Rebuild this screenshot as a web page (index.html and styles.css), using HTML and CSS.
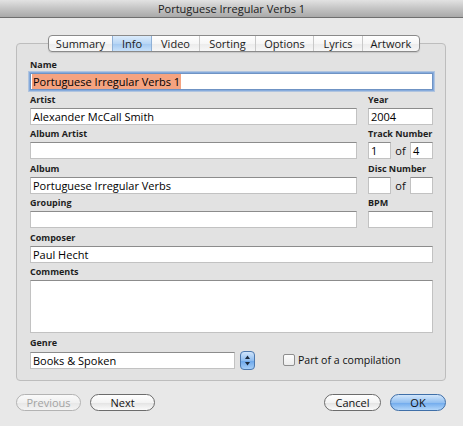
FILE: index.html
```html
<!DOCTYPE html>
<html>
<head>
<meta charset="utf-8">
<title>Portuguese Irregular Verbs 1</title>
<link rel="stylesheet" href="styles.css">
</head>
<body>
<div class="window">
  <div class="titlebar">Portuguese Irregular Verbs 1</div>
  <div class="content">
    <div class="tabs">
      <span class="tab t-summary">Summary</span>
      <span class="tab t-info active">Info</span>
      <span class="tab t-video">Video</span>
      <span class="tab t-sorting">Sorting</span>
      <span class="tab t-options">Options</span>
      <span class="tab t-lyrics">Lyrics</span>
      <span class="tab t-artwork">Artwork</span>
    </div>
    <div class="panel">
      <div class="form">
        <div class="field span2">
          <div class="label">Name</div>
          <div class="input focus"><span class="sel">Portuguese Irregular Verbs 1</span></div>
        </div>
        <div class="field">
          <div class="label">Artist</div>
          <div class="input">Alexander McCall Smith</div>
        </div>
        <div class="field">
          <div class="label">Year</div>
          <div class="input">2004</div>
        </div>
        <div class="field">
          <div class="label">Album Artist</div>
          <div class="input"></div>
        </div>
        <div class="field">
          <div class="label">Track Number</div>
          <div class="pair">
            <div class="input small">1</div>
            <span class="of">of</span>
            <div class="input small">4</div>
          </div>
        </div>
        <div class="field">
          <div class="label">Album</div>
          <div class="input">Portuguese Irregular Verbs</div>
        </div>
        <div class="field">
          <div class="label">Disc Number</div>
          <div class="pair">
            <div class="input small"></div>
            <span class="of">of</span>
            <div class="input small"></div>
          </div>
        </div>
        <div class="field">
          <div class="label">Grouping</div>
          <div class="input"></div>
        </div>
        <div class="field">
          <div class="label">BPM</div>
          <div class="input"></div>
        </div>
        <div class="field span2">
          <div class="label">Composer</div>
          <div class="input">Paul Hecht</div>
        </div>
        <div class="field span2">
          <div class="label">Comments</div>
          <div class="input textarea"></div>
        </div>
        <div class="field span2">
          <div class="label">Genre</div>
          <div class="genre-row">
            <div class="input genre">Books &amp; Spoken</div>
            <svg class="stepper" width="15" height="19" viewBox="0 0 15 19">
              <defs>
                <linearGradient id="sg" x1="0" y1="0" x2="0" y2="1">
                  <stop offset="0" stop-color="#d3e6fb"/>
                  <stop offset="0.5" stop-color="#8fbdf0"/>
                  <stop offset="0.51" stop-color="#6aa6ea"/>
                  <stop offset="1" stop-color="#a9d0f8"/>
                </linearGradient>
              </defs>
              <rect x="0.5" y="0.5" width="14" height="18" rx="3.5" fill="url(#sg)" stroke="#4d78ad"/>
              <path d="M7.5 4.5 L10 8 L5 8 Z" fill="#1c2a3c"/>
              <path d="M7.5 14.5 L10 11 L5 11 Z" fill="#1c2a3c"/>
            </svg>
            <span class="checkbox"></span>
            <span class="check-label">Part of a compilation</span>
          </div>
        </div>
      </div>
    </div>
    <div class="buttons">
      <span class="btn prev">Previous</span>
      <span class="btn next">Next</span>
      <span class="spacer"></span>
      <span class="btn cancel">Cancel</span>
      <span class="btn ok">OK</span>
    </div>
  </div>
</div>
</body>
</html>
```

FILE: styles.css
```css
body {
  margin: 0;
  background: #e8e8e8;
  font-family: "Open Sans", "DejaVu Sans", sans-serif;
  color: #111;
}

.window {
  width: 463px;
  height: 426px;
  display: flex;
  flex-direction: column;
  overflow: hidden;
}

.titlebar {
  height: 17px;
  border-bottom: 1px solid #6f6f6f;
  background: linear-gradient(#e2e2e2, #c4c4c4 50%, #a9a9a9);
  text-align: center;
  font-size: 11px;
  line-height: 17px;
  color: #1a1a1a;
}

.content {
  padding: 17px 17px 0 16px;
}

.tabs {
  position: relative;
  z-index: 1;
  display: flex;
  margin-left: 32px;
  width: 372px;
  height: 17px;
  box-sizing: border-box;
  border: 1px solid #8a8a8a;
  border-radius: 4px;
  overflow: hidden;
  background: linear-gradient(#ffffff, #f6f6f6 50%, #ebebeb 51%, #f7f7f7);
  box-shadow: 0 1px 1px rgba(0, 0, 0, 0.12);
}

.tab {
  box-sizing: border-box;
  font-size: 11px;
  line-height: 15px;
  text-align: center;
  border-left: 1px solid #c9c9c9;
  color: #1a1a1a;
}

.tab:first-child { border-left: none; }
.tab.active {
  background: linear-gradient(#dcecfc, #b8d6f5 50%, #a2c8f0 51%, #c8e1fa);
  border-left-color: #8fb0d6;
}
.tab.active + .tab { border-left-color: #8fb0d6; }

.t-summary { width: 63px; }
.t-info { width: 39px; }
.t-video { width: 48px; }
.t-sorting { width: 56px; }
.t-options { width: 58px; }
.t-lyrics { width: 49px; }
.t-artwork { width: 57px; }

.panel {
  margin-top: -9px;
  border: 1px solid #bdbdbd;
  border-radius: 4px;
  background: #e2e2e2;
  padding: 15px 12px 10px 13px;
}

.form {
  display: grid;
  grid-template-columns: 327px 65px;
  column-gap: 11px;
  row-gap: 3.5px;
}

.span2 { grid-column: 1 / 3; }

.label {
  font-size: 9px;
  font-weight: bold;
  line-height: 11px;
  margin-bottom: 3px;
  color: #1e1e1e;
  white-space: nowrap;
}

.input {
  height: 17px;
  box-sizing: border-box;
  background: #fff;
  border: 1px solid #c2c2c2;
  border-top-color: #8c8c8c;
  font-size: 11px;
  line-height: 15px;
  padding: 0 2px;
  white-space: nowrap;
  overflow: hidden;
  color: #000;
}

.input.focus {
  border-color: #6f93c4;
  box-shadow: 0 0 0 1px #86abdc, 0 0 0 2px rgba(134, 171, 220, 0.55);
  padding-left: 1px;
}

.sel {
  background: #f5a380;
  padding: 0 1px;
}

.textarea { height: 53px; }

.pair {
  display: flex;
  align-items: center;
}

.input.small { width: 23px; }

.of {
  flex: 1;
  text-align: center;
  font-size: 11px;
  line-height: 17px;
}

.genre-row {
  display: flex;
  align-items: center;
  height: 19px;
}

.input.genre { width: 205px; }

.stepper {
  margin-left: 5px;
  display: block;
}

.checkbox {
  width: 12px;
  height: 12px;
  box-sizing: border-box;
  margin-left: 28px;
  border: 1px solid #8e8e8e;
  border-radius: 2px;
  background: linear-gradient(#fdfdfd, #ececec);
}

.check-label {
  margin-left: 3px;
  font-size: 10.6px;
  line-height: 15px;
}

.buttons {
  display: flex;
  margin-top: 13px;
}

.btn {
  height: 17px;
  box-sizing: border-box;
  border-radius: 9px;
  border: 1px solid #6c6c6c;
  background: linear-gradient(#ffffff, #f3f3f3 50%, #e2e2e2 51%, #fbfbfb);
  font-size: 11px;
  line-height: 15px;
  text-align: center;
  color: #111;
}

.prev {
  width: 65px;
  color: #a3a3a3;
  border-color: #b3b3b3;
  background: linear-gradient(#fafafa, #f0f0f0 50%, #e6e6e6 51%, #f4f4f4);
}

.next {
  width: 65px;
  margin-left: 9px;
}

.spacer { flex: 1; }

.cancel { width: 57px; }

.ok {
  width: 56px;
  margin-left: 9px;
  border-color: #3f6fa8;
  background: linear-gradient(#d2e6fb, #93c0f1 50%, #6ea9ec 51%, #b2d6fa);
}
```
